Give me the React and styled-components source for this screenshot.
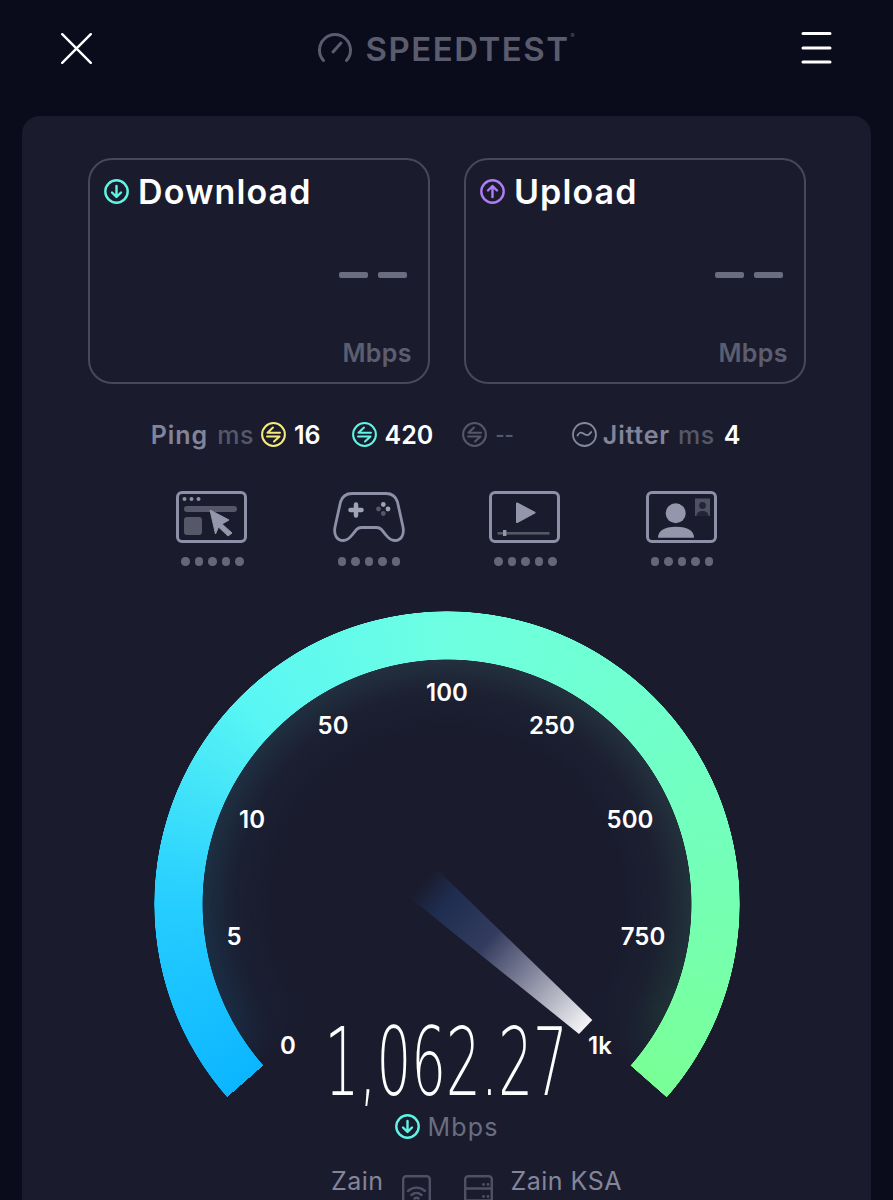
import React from "react";
import styled, { createGlobalStyle } from "styled-components";

const GlobalStyle = createGlobalStyle`
  html, body {
    margin: 0;
    padding: 0;
    background: #0a0c1c;
  }
  body {
    font-family: Inter, "Noto Sans", "Liberation Sans", sans-serif;
  }
`;

const Page = styled.div`
  width: 893px;
  height: 1200px;
  overflow: hidden;
  background: #0a0c1c;
`;

const Header = styled.header`
  display: flex;
  align-items: center;
  justify-content: space-between;
  width: 771px;
  height: 96px;
  padding: 0 61px 20px 61px;
`;

const Logo = styled.div`
  position: relative;
  display: flex;
  align-items: center;
  gap: 13px;
  padding-right: 5px;
  color: #5a5c6e;
`;

const LogoText = styled.span`
  margin-top: 2px;
  font-size: 33px;
  font-weight: 600;
  line-height: 36px;
  letter-spacing: 1.5px;
`;

const LogoMark = styled.span`
  position: absolute;
  right: 0;
  top: 4px;
  font-size: 6px;
  line-height: 1;
`;

const Card = styled.main`
  display: flex;
  flex-direction: column;
  align-items: center;
  box-sizing: border-box;
  width: 849px;
  height: 1084px;
  margin-left: 22px;
  padding: 42px 0 0 1px;
  background: #1a1c2e;
  border-radius: 18px 18px 0 0;
`;

const Results = styled.section`
  display: grid;
  flex: none;
  grid-template-columns: 342px 342px;
  gap: 34px;
`;

const ResultBox = styled.div`
  display: flex;
  flex-direction: column;
  box-sizing: border-box;
  height: 226px;
  padding: 16px 16px 14px 14px;
  border: 2px solid #47495b;
  border-radius: 24px;
`;

const ResultTitle = styled.div`
  display: flex;
  align-items: center;
  gap: 9px;
  height: 30px;
  color: #ffffff;
  font-size: 34px;
  font-weight: 600;
  letter-spacing: 1.1px;
`;

const Dashes = styled.div`
  display: flex;
  justify-content: flex-end;
  gap: 10px;
  margin-top: 66px;
  padding-right: 5px;
`;

const Dash = styled.span`
  width: 29px;
  height: 6px;
  border-radius: 2px;
  background: #6a6c80;
`;

const ResultUnit = styled.div`
  margin-top: auto;
  text-align: right;
  color: #5c5e70;
  font-size: 25px;
  font-weight: 600;
  line-height: 30px;
  letter-spacing: 0.4px;
`;

const StatRow = styled.section`
  display: flex;
  flex: none;
  align-items: center;
  justify-content: center;
  height: 25px;
  margin: 38px 3px 0 0;
  font-size: 25px;
  font-weight: 600;
`;

const Stat = styled.div`
  display: flex;
  align-items: center;
  gap: ${(p) => p.$gap || 8}px;
  margin-left: ${(p) => p.$offset || 0}px;
`;

const StatLabel = styled.span`
  margin-left: ${(p) => p.$pull || 0}px;
  color: #82849a;
  letter-spacing: ${(p) => p.$spacing || 0}px;
`;

const StatUnit = styled.span`
  margin: 0 -1px 0 ${(p) => p.$pull ?? 1}px;
  color: #565869;
  font-weight: 500;
  letter-spacing: 0.5px;
`;

const StatValue = styled.span`
  margin-left: ${(p) => p.$push || 0}px;
  color: ${(p) => (p.$muted ? "#565869" : "#ffffff")};
  font-size: ${(p) => (p.$muted ? 20 : 25)}px;
`;

const Activities = styled.section`
  display: grid;
  flex: none;
  grid-template-columns: repeat(4, 156.5px);
  margin-top: 44px;
`;

const Activity = styled.div`
  display: flex;
  flex-direction: column;
  align-items: center;
  gap: 12px;
`;

const Rating = styled.div`
  display: flex;
  gap: 5px;
`;

const RatingDot = styled.span`
  width: 8.5px;
  height: 8.5px;
  border-radius: 50%;
  background: #656779;
`;

const Gauge = styled.section`
  position: relative;
  flex: none;
  width: 586px;
  height: 555px;
  margin-top: 45px;
`;

const Ring = styled.div`
  position: absolute;
  inset: 0 0 auto 0;
  height: 586px;
  border-radius: 50%;
  background: conic-gradient(
    from 228.7deg,
    #0cb6ff 0deg,
    #26cdff 41deg,
    #59f6f4 86deg,
    #6effe2 131deg,
    #70ffcd 176deg,
    #75ffb3 221deg,
    #7aff96 262.6deg,
    transparent 262.7deg
  );
  mask: radial-gradient(circle closest-side, transparent 244.2px, #000 244.8px, #000 292.4px, transparent 293px);
`;

const Glow = styled.div`
  position: absolute;
  inset: 0 0 auto 0;
  height: 586px;
  border-radius: 50%;
  background: conic-gradient(
    from 228.7deg,
    #1a1c2e 0deg,
    #1a2d44 14deg,
    #1c3044 41deg,
    #24313f 131deg,
    #23323c 221deg,
    #1f3236 248deg,
    #1a1c2e 262.6deg,
    transparent 262.7deg
  );
  mask: radial-gradient(circle closest-side, transparent 176px, rgba(0, 0, 0, 0.22) 212px, #000 245px, transparent 245.5px);
`;

const DialSvg = styled.svg`
  position: absolute;
  inset: 0 0 auto 0;
  width: 586px;
  height: 586px;
`;

const Tick = styled.span`
  position: absolute;
  left: ${(p) => p.$x - 154}px;
  top: ${(p) => p.$y - 610}px;
  transform: translate(-50%, -50%);
  color: #ffffff;
  font-size: 24px;
  font-weight: 600;
  line-height: 1;
`;

const Reading = styled.div`
  position: absolute;
  left: 0;
  right: 0;
  top: 411px;
  display: flex;
  flex-direction: column;
  align-items: center;
`;

const Speed = styled.div`
  height: 80px;
  color: #ffffff;
  font-family: "DejaVu Sans", sans-serif;
  font-size: 95px;
  font-weight: 200;
  line-height: 80px;
  white-space: nowrap;
  transform: translateX(-0.5px) scaleX(0.575);
`;

const SpeedUnit = styled.div`
  display: flex;
  align-items: center;
  gap: 7px;
  height: 30px;
  margin-top: 10px;
  color: #6b6d80;
  font-size: 25px;
  font-weight: 400;
  letter-spacing: 1.2px;
`;

const Servers = styled.section`
  display: grid;
  flex: none;
  grid-template-columns: 1fr auto 1fr;
  gap: 18px;
  width: 718px;
  color: #83859a;
  font-size: 25px;
  font-weight: 400;
  line-height: 30px;
  letter-spacing: 0.5px;
`;

const ServerName = styled.div`
  text-align: ${(p) => p.$align};
`;

const ServerIcons = styled.div`
  display: flex;
  gap: 33px;
  padding-top: 9px;
`;

const Glyph = styled.svg`
  display: block;
  flex: none;
`;

const DirectionIcon = ({ color, up, size = 25 }) => (
  <Glyph width={size} height={size} viewBox="0 0 25 25" fill="none" stroke={color} strokeWidth="2.4" strokeLinecap="round" strokeLinejoin="round">
    <circle cx="12.5" cy="12.5" r="11.2" />
    {up ? <path d="M12.5 18V7.5M8 11.5l4.5-4.5 4.5 4.5" /> : <path d="M12.5 7v10.5M8 13.5l4.5 4.5 4.5-4.5" />}
  </Glyph>
);

const PingIcon = ({ color }) => (
  <Glyph width="25" height="25" viewBox="0 0 25 25" fill="none" stroke={color} strokeWidth="2" strokeLinecap="round" strokeLinejoin="round">
    <circle cx="12.5" cy="12.5" r="11.4" />
    <path d="M19 10.8H6.5L12 5.6M6 14.4h12.5L13 19.6" />
  </Glyph>
);

const JitterIcon = () => (
  <Glyph width="25" height="25" viewBox="0 0 25 25" fill="none" stroke="#85879b" strokeWidth="1.8" strokeLinecap="round">
    <circle cx="12.5" cy="12.5" r="11.5" />
    <path d="M5.5 13.5c1.500-3 3.600-3.600 5.500-2.200s3.900 2.400 5.500 1.400 2-1.600 2.700-2.700" />
  </Glyph>
);

const FRAME = "#8e90a8";
const DIM = "#565869";

const BrowseIcon = () => (
  <Glyph width="72" height="54" viewBox="0 0 72 54" fill="none">
    <rect x="1.500" y="1.500" width="68" height="49" rx="4.500" stroke={FRAME} strokeWidth="3" />
    <circle cx="8.500" cy="8" r="2" fill={FRAME} />
    <circle cx="15.500" cy="8" r="2" fill={FRAME} />
    <circle cx="22.500" cy="8" r="2" fill={FRAME} />
    <rect x="8" y="15" width="53" height="6" rx="3" fill={DIM} />
    <rect x="8" y="26" width="18" height="18" rx="3" fill={DIM} />
    <path d="M34 19l19 10-7 4 10 9-4 3-9.500-9-3 7z" fill="#9496ac" stroke="#9496ac" strokeWidth="1" strokeLinejoin="round" />
  </Glyph>
);

const GameIcon = () => (
  <Glyph width="72" height="54" viewBox="0 0 72 54" fill="none">
    <path
      d="M19 2.500H53C59 2.500 63 6 64.500 11L70 36C71.500 44 68 49.500 62 49.500C58 49.500 55.500 47.500 53 44L48.500 38.500C47 37 45.500 36.500 43.500 36.500H28.500C26.500 36.500 25 37 23.500 38.500L19 44C16.500 47.500 14 49.500 10 49.500C4 49.500 .5 44 2 36L7.500 11C9 6 13 2.500 19 2.500Z"
      stroke={FRAME}
      strokeWidth="2.800"
    />
    <path d="M23 13.500v11M17.500 19h11" stroke="#a0a2b6" strokeWidth="4.500" strokeLinecap="round" />
    <circle cx="50.300" cy="13.500" r="2.400" fill="#a0a2b6" />
    <circle cx="55" cy="18" r="2.400" fill="#a0a2b6" />
    <circle cx="45.500" cy="18" r="2.400" fill={DIM} />
    <circle cx="50.300" cy="22.500" r="2.400" fill={DIM} />
  </Glyph>
);

const VideoIcon = () => (
  <Glyph width="72" height="54" viewBox="0 0 72 54" fill="none">
    <rect x="1.500" y="1.500" width="68" height="49" rx="4.500" stroke={FRAME} strokeWidth="3" />
    <path d="M28 12.500L45.500 21.700 28 31z" fill="#9496ac" stroke="#9496ac" strokeWidth="2" strokeLinejoin="round" />
    <rect x="8.500" y="41" width="52" height="2.600" fill={DIM} />
    <rect x="14" y="39" width="3.400" height="6" fill="#9496ac" />
  </Glyph>
);

const CallIcon = () => (
  <Glyph width="72" height="54" viewBox="0 0 72 54" fill="none">
    <rect x="1.500" y="1.500" width="68" height="49" rx="4.500" stroke={FRAME} strokeWidth="3" />
    <circle cx="29.700" cy="22.300" r="10" fill="#9496ac" />
    <path d="M12 46.700C12 40 18 35.700 30 35.700S48 40 48 46.700z" fill="#9496ac" />
    <rect x="49" y="7.500" width="15" height="17.500" fill="#4f5163" />
    <circle cx="56.500" cy="14.500" r="3.400" fill="#23253a" />
    <path d="M50.500 25c0-3.500 2.500-5 6-5s6 1.500 6 5z" fill="#23253a" />
  </Glyph>
);

const WifiIcon = () => (
  <Glyph width="29" height="42" viewBox="0 0 29 42" fill="none" stroke="#4f5163" strokeWidth="2.400" strokeLinecap="round">
    <rect x="1.200" y="1.200" width="26.600" height="39.600" rx="3" />
    <path d="M6 16c5-4.500 12-4.500 17 0M9.500 20c3-2.600 7-2.600 10 0M12.500 23.500c1.200-1 2.800-1 4 0" />
  </Glyph>
);

const ServerIcon = () => (
  <Glyph width="29" height="42" viewBox="0 0 29 42" fill="none" stroke="#4f5163" strokeWidth="2.400">
    <rect x="1.200" y="1.200" width="26.600" height="39.600" rx="3" />
    <path d="M1.200 13.500h26.600M1.200 25.500h26.600" />
    <circle cx="19.500" cy="9.500" r="1.400" fill="#4f5163" stroke="none" />
    <circle cx="24" cy="9.500" r="1.400" fill="#4f5163" stroke="none" />
    <circle cx="19.500" cy="21.500" r="1.400" fill="#4f5163" stroke="none" />
    <circle cx="24" cy="21.500" r="1.400" fill="#4f5163" stroke="none" />
  </Glyph>
);

const activities = [BrowseIcon, GameIcon, VideoIcon, CallIcon];

const ticks = [
  ["0", 288, 1045],
  ["5", 234, 936],
  ["10", 252, 819],
  ["50", 333, 725],
  ["100", 447, 692],
  ["250", 552, 725],
  ["500", 630, 819],
  ["750", 643, 936],
  ["1k", 600, 1045],
];

const Needle = () => (
  <DialSvg viewBox="154 611 586 586">
    <defs>
      <linearGradient id="needle" gradientUnits="userSpaceOnUse" x1="423" y1="883" x2="586" y2="1027">
        <stop offset="0" stopColor="#1f2d50" stopOpacity="0" />
        <stop offset="0.14" stopColor="#1f2d50" />
        <stop offset="0.4" stopColor="#333c5e" />
        <stop offset="0.65" stopColor="#83859c" />
        <stop offset="1" stopColor="#f5f5f7" />
      </linearGradient>
    </defs>
    <polygon points="436.700,869.300 592.300,1020 579,1034 409.300,897.300" fill="url(#needle)" />
  </DialSvg>
);

export default function App() {
  return (
    <>
      <GlobalStyle />
      <Page>
        <Header>
          <Glyph width="31" height="31" viewBox="0 0 31 31" stroke="#ffffff" strokeWidth="2.400" strokeLinecap="round">
            <path d="M1.200 1.200l28.600 28.600M29.800 1.200l-28.600 28.600" />
          </Glyph>
          <Logo>
            <Glyph width="34" height="32" viewBox="0 0 34 32" fill="none" stroke="#5a5c6e" strokeWidth="3" strokeLinecap="round">
              <path d="M5.500 28.500A15.500 15.500 0 1 1 28.500 28.500" />
              <path d="M15 20l8-9" />
            </Glyph>
            <LogoText>SPEEDTEST</LogoText>
            <LogoMark>®</LogoMark>
          </Logo>
          <Glyph width="31" height="32" viewBox="0 0 31 32" stroke="#ffffff" strokeWidth="3" strokeLinecap="round">
            <path d="M2 1.500h27M2 16h27M2 30h27" />
          </Glyph>
        </Header>
        <Card>
          <Results>
            <ResultBox>
              <ResultTitle>
                <DirectionIcon color="#5ff5e4" />
                Download
              </ResultTitle>
              <Dashes>
                <Dash />
                <Dash />
              </Dashes>
              <ResultUnit>Mbps</ResultUnit>
            </ResultBox>
            <ResultBox>
              <ResultTitle>
                <DirectionIcon color="#b07cf5" up />
                Upload
              </ResultTitle>
              <Dashes>
                <Dash />
                <Dash />
              </Dashes>
              <ResultUnit>Mbps</ResultUnit>
            </ResultBox>
          </Results>
          <StatRow>
            <Stat>
              <StatLabel $spacing={1}>Ping</StatLabel>
              <StatUnit>ms</StatUnit>
              <PingIcon color="#f7e97c" />
              <StatValue>16</StatValue>
            </Stat>
            <Stat $offset={31}>
              <PingIcon color="#5ff5e4" />
              <StatValue>420</StatValue>
            </Stat>
            <Stat $offset={29}>
              <PingIcon color="#565869" />
              <StatValue $muted>--</StatValue>
            </Stat>
            <Stat $offset={58} $gap={9}>
              <JitterIcon />
              <StatLabel $spacing={0.8} $pull={-3}>
                Jitter
              </StatLabel>
              <StatUnit $pull={-1}>ms</StatUnit>
              <StatValue $push={1}>4</StatValue>
            </Stat>
          </StatRow>
          <Activities>
            {activities.map((Icon, i) => (
              <Activity key={i}>
                <Icon />
                <Rating>
                  {[0, 1, 2, 3, 4].map((n) => (
                    <RatingDot key={n} />
                  ))}
                </Rating>
              </Activity>
            ))}
          </Activities>
          <Gauge>
            <Glow />
            <Ring />
            <Needle />
            {ticks.map(([label, x, y]) => (
              <Tick key={label} $x={x} $y={y}>
                {label}
              </Tick>
            ))}
            <Reading>
              <Speed>1,062.27</Speed>
              <SpeedUnit>
                <DirectionIcon color="#5ff5e4" />
                Mbps
              </SpeedUnit>
            </Reading>
          </Gauge>
          <Servers>
            <ServerName $align="right">Zain</ServerName>
            <ServerIcons>
              <WifiIcon />
              <ServerIcon />
            </ServerIcons>
            <ServerName $align="left">Zain KSA</ServerName>
          </Servers>
        </Card>
      </Page>
    </>
  );
}
